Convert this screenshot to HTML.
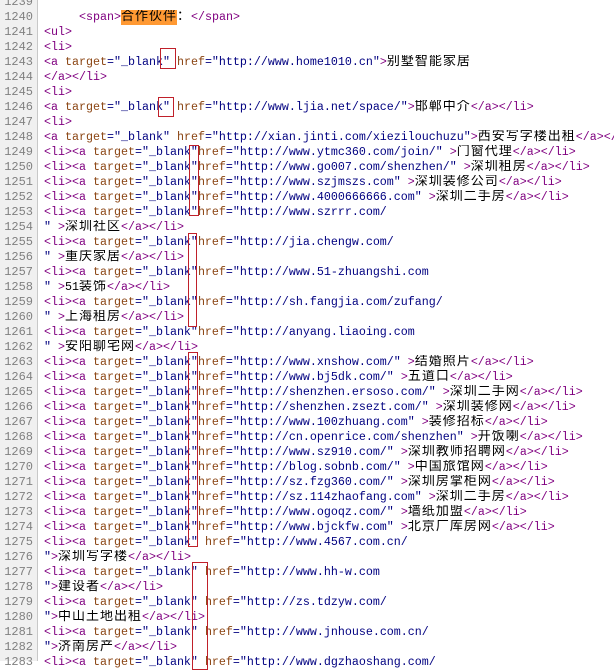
<!DOCTYPE html>
<html><head><meta charset="utf-8"><style>
html,body{margin:0;padding:0;background:#fff;width:614px;height:661px;overflow:hidden}
#g{position:absolute;left:0;top:0;width:37px;height:661px;background:#f0f0f0;border-right:1px solid #c8c8c8}
#w{position:absolute;left:0;top:-5px;width:614px}
.l{height:15px;white-space:pre;font:11.67px/15px "Liberation Mono","Noto Sans CJK SC",monospace;color:#000;position:relative;overflow:hidden}
.n{position:absolute;left:0;top:0;width:33px;text-align:right;color:#808080;font-size:12px}
.x{position:absolute;left:44px;top:0;height:15px;line-height:15px;display:block}
i,b,u,em{font-style:normal;font-weight:normal;text-decoration:none}
i{color:#800080}b{color:#8b4513}u{color:#000080}
em{font-family:"Noto Sans CJK SC",sans-serif;font-size:13px;letter-spacing:1px;display:inline-block;height:15px;line-height:15px;vertical-align:top;position:relative;top:-3px}
em.h{top:0;line-height:9px;padding-top:0;height:15px}
.h{background:#ff9933}
.r{position:absolute;border:1px solid #c0202a}
</style></head><body>
<div id="g"></div>
<div id="w">
<div class="l"><span class="n">1239</span><span class="x"></span></div>
<div class="l"><span class="n">1240</span><span class="x">     <i>&lt;span&gt;</i><em class="h">合作伙伴</em><em>：</em><i>&lt;/span&gt;</i></span></div>
<div class="l"><span class="n">1241</span><span class="x"><i>&lt;ul&gt;</i></span></div>
<div class="l"><span class="n">1242</span><span class="x"><i>&lt;li&gt;</i></span></div>
<div class="l"><span class="n">1243</span><span class="x"><i>&lt;a</i> <b>target</b><u>="_blank"</u> <b>href</b><u>="http://www.home1010.cn"</u><i>&gt;</i><em>别墅智能家居</em></span></div>
<div class="l"><span class="n">1244</span><span class="x"><i>&lt;/a&gt;&lt;/li&gt;</i></span></div>
<div class="l"><span class="n">1245</span><span class="x"><i>&lt;li&gt;</i></span></div>
<div class="l"><span class="n">1246</span><span class="x"><i>&lt;a</i> <b>target</b><u>="_blank"</u> <b>href</b><u>="http://www.ljia.net/space/"</u><i>&gt;</i><em>邯郸中介</em><i>&lt;/a&gt;&lt;/li&gt;</i></span></div>
<div class="l"><span class="n">1247</span><span class="x"><i>&lt;li&gt;</i></span></div>
<div class="l"><span class="n">1248</span><span class="x"><i>&lt;a</i> <b>target</b><u>="_blank"</u> <b>href</b><u>="http://xian.jinti.com/xiezilouchuzu"</u><i>&gt;</i><em>西安写字楼出租</em><i>&lt;/a&gt;&lt;/li&gt;</i></span></div>
<div class="l"><span class="n">1249</span><span class="x"><i>&lt;li&gt;&lt;a</i> <b>target</b><u>="_blank"</u><b>href</b><u>="http://www.ytmc360.com/join/"</u> <i>&gt;</i><em>门窗代理</em><i>&lt;/a&gt;&lt;/li&gt;</i></span></div>
<div class="l"><span class="n">1250</span><span class="x"><i>&lt;li&gt;&lt;a</i> <b>target</b><u>="_blank"</u><b>href</b><u>="http://www.go007.com/shenzhen/"</u> <i>&gt;</i><em>深圳租房</em><i>&lt;/a&gt;&lt;/li&gt;</i></span></div>
<div class="l"><span class="n">1251</span><span class="x"><i>&lt;li&gt;&lt;a</i> <b>target</b><u>="_blank"</u><b>href</b><u>="http://www.szjmszs.com"</u> <i>&gt;</i><em>深圳装修公司</em><i>&lt;/a&gt;&lt;/li&gt;</i></span></div>
<div class="l"><span class="n">1252</span><span class="x"><i>&lt;li&gt;&lt;a</i> <b>target</b><u>="_blank"</u><b>href</b><u>="http://www.4000666666.com"</u> <i>&gt;</i><em>深圳二手房</em><i>&lt;/a&gt;&lt;/li&gt;</i></span></div>
<div class="l"><span class="n">1253</span><span class="x"><i>&lt;li&gt;&lt;a</i> <b>target</b><u>="_blank"</u><b>href</b><u>="http://www.szrrr.com/</u></span></div>
<div class="l"><span class="n">1254</span><span class="x"><u>"</u> <i>&gt;</i><em>深圳社区</em><i>&lt;/a&gt;&lt;/li&gt;</i></span></div>
<div class="l"><span class="n">1255</span><span class="x"><i>&lt;li&gt;&lt;a</i> <b>target</b><u>="_blank"</u><b>href</b><u>="http://jia.chengw.com/</u></span></div>
<div class="l"><span class="n">1256</span><span class="x"><u>"</u> <i>&gt;</i><em>重庆家居</em><i>&lt;/a&gt;&lt;/li&gt;</i></span></div>
<div class="l"><span class="n">1257</span><span class="x"><i>&lt;li&gt;&lt;a</i> <b>target</b><u>="_blank"</u><b>href</b><u>="http://www.51-zhuangshi.com</u></span></div>
<div class="l"><span class="n">1258</span><span class="x"><u>"</u> <i>&gt;</i>51<em>装饰</em><i>&lt;/a&gt;&lt;/li&gt;</i></span></div>
<div class="l"><span class="n">1259</span><span class="x"><i>&lt;li&gt;&lt;a</i> <b>target</b><u>="_blank"</u><b>href</b><u>="http://sh.fangjia.com/zufang/</u></span></div>
<div class="l"><span class="n">1260</span><span class="x"><u>"</u> <i>&gt;</i><em>上海租房</em><i>&lt;/a&gt;&lt;/li&gt;</i></span></div>
<div class="l"><span class="n">1261</span><span class="x"><i>&lt;li&gt;&lt;a</i> <b>target</b><u>="_blank"</u><b>href</b><u>="http://anyang.liaoing.com</u></span></div>
<div class="l"><span class="n">1262</span><span class="x"><u>"</u> <i>&gt;</i><em>安阳聊宅网</em><i>&lt;/a&gt;&lt;/li&gt;</i></span></div>
<div class="l"><span class="n">1263</span><span class="x"><i>&lt;li&gt;&lt;a</i> <b>target</b><u>="_blank"</u><b>href</b><u>="http://www.xnshow.com/"</u> <i>&gt;</i><em>结婚照片</em><i>&lt;/a&gt;&lt;/li&gt;</i></span></div>
<div class="l"><span class="n">1264</span><span class="x"><i>&lt;li&gt;&lt;a</i> <b>target</b><u>="_blank"</u><b>href</b><u>="http://www.bj5dk.com/"</u> <i>&gt;</i><em>五道口</em><i>&lt;/a&gt;&lt;/li&gt;</i></span></div>
<div class="l"><span class="n">1265</span><span class="x"><i>&lt;li&gt;&lt;a</i> <b>target</b><u>="_blank"</u><b>href</b><u>="http://shenzhen.ersoso.com/"</u> <i>&gt;</i><em>深圳二手网</em><i>&lt;/a&gt;&lt;/li&gt;</i></span></div>
<div class="l"><span class="n">1266</span><span class="x"><i>&lt;li&gt;&lt;a</i> <b>target</b><u>="_blank"</u><b>href</b><u>="http://shenzhen.zsezt.com/"</u> <i>&gt;</i><em>深圳装修网</em><i>&lt;/a&gt;&lt;/li&gt;</i></span></div>
<div class="l"><span class="n">1267</span><span class="x"><i>&lt;li&gt;&lt;a</i> <b>target</b><u>="_blank"</u><b>href</b><u>="http://www.100zhuang.com"</u> <i>&gt;</i><em>装修招标</em><i>&lt;/a&gt;&lt;/li&gt;</i></span></div>
<div class="l"><span class="n">1268</span><span class="x"><i>&lt;li&gt;&lt;a</i> <b>target</b><u>="_blank"</u><b>href</b><u>="http://cn.openrice.com/shenzhen"</u> <i>&gt;</i><em>开饭喇</em><i>&lt;/a&gt;&lt;/li&gt;</i></span></div>
<div class="l"><span class="n">1269</span><span class="x"><i>&lt;li&gt;&lt;a</i> <b>target</b><u>="_blank"</u><b>href</b><u>="http://www.sz910.com/"</u> <i>&gt;</i><em>深圳教师招聘网</em><i>&lt;/a&gt;&lt;/li&gt;</i></span></div>
<div class="l"><span class="n">1270</span><span class="x"><i>&lt;li&gt;&lt;a</i> <b>target</b><u>="_blank"</u><b>href</b><u>="http://blog.sobnb.com/"</u> <i>&gt;</i><em>中国旅馆网</em><i>&lt;/a&gt;&lt;/li&gt;</i></span></div>
<div class="l"><span class="n">1271</span><span class="x"><i>&lt;li&gt;&lt;a</i> <b>target</b><u>="_blank"</u><b>href</b><u>="http://sz.fzg360.com/"</u> <i>&gt;</i><em>深圳房掌柜网</em><i>&lt;/a&gt;&lt;/li&gt;</i></span></div>
<div class="l"><span class="n">1272</span><span class="x"><i>&lt;li&gt;&lt;a</i> <b>target</b><u>="_blank"</u><b>href</b><u>="http://sz.114zhaofang.com"</u> <i>&gt;</i><em>深圳二手房</em><i>&lt;/a&gt;&lt;/li&gt;</i></span></div>
<div class="l"><span class="n">1273</span><span class="x"><i>&lt;li&gt;&lt;a</i> <b>target</b><u>="_blank"</u><b>href</b><u>="http://www.ogoqz.com/"</u> <i>&gt;</i><em>墙纸加盟</em><i>&lt;/a&gt;&lt;/li&gt;</i></span></div>
<div class="l"><span class="n">1274</span><span class="x"><i>&lt;li&gt;&lt;a</i> <b>target</b><u>="_blank"</u><b>href</b><u>="http://www.bjckfw.com"</u> <i>&gt;</i><em>北京厂库房网</em><i>&lt;/a&gt;&lt;/li&gt;</i></span></div>
<div class="l"><span class="n">1275</span><span class="x"><i>&lt;li&gt;&lt;a</i> <b>target</b><u>="_blank"</u> <b>href</b><u>="http://www.4567.com.cn/</u></span></div>
<div class="l"><span class="n">1276</span><span class="x"><u>"</u><i>&gt;</i><em>深圳写字楼</em><i>&lt;/a&gt;&lt;/li&gt;</i></span></div>
<div class="l"><span class="n">1277</span><span class="x"><i>&lt;li&gt;&lt;a</i> <b>target</b><u>="_blank"</u> <b>href</b><u>="http://www.hh-w.com</u></span></div>
<div class="l"><span class="n">1278</span><span class="x"><u>"</u><i>&gt;</i><em>建设者</em><i>&lt;/a&gt;&lt;/li&gt;</i></span></div>
<div class="l"><span class="n">1279</span><span class="x"><i>&lt;li&gt;&lt;a</i> <b>target</b><u>="_blank"</u> <b>href</b><u>="http://zs.tdzyw.com/</u></span></div>
<div class="l"><span class="n">1280</span><span class="x"><u>"</u><i>&gt;</i><em>中山土地出租</em><i>&lt;/a&gt;&lt;/li&gt;</i></span></div>
<div class="l"><span class="n">1281</span><span class="x"><i>&lt;li&gt;&lt;a</i> <b>target</b><u>="_blank"</u> <b>href</b><u>="http://www.jnhouse.com.cn/</u></span></div>
<div class="l"><span class="n">1282</span><span class="x"><u>"</u><i>&gt;</i><em>济南房产</em><i>&lt;/a&gt;&lt;/li&gt;</i></span></div>
<div class="l"><span class="n">1283</span><span class="x"><i>&lt;li&gt;&lt;a</i> <b>target</b><u>="_blank"</u> <b>href</b><u>="http://www.dgzhaoshang.com/</u></span></div>
</div>
<div class="r" style="left:160px;top:48px;width:14px;height:19px"></div>
<div class="r" style="left:158px;top:97px;width:14px;height:18px"></div>
<div class="r" style="left:189px;top:145px;width:8px;height:69px"></div>
<div class="r" style="left:188px;top:233px;width:7px;height:92px"></div>
<div class="r" style="left:188px;top:352px;width:8px;height:193px"></div>
<div class="r" style="left:192px;top:562px;width:14px;height:106px"></div>
</body></html>
